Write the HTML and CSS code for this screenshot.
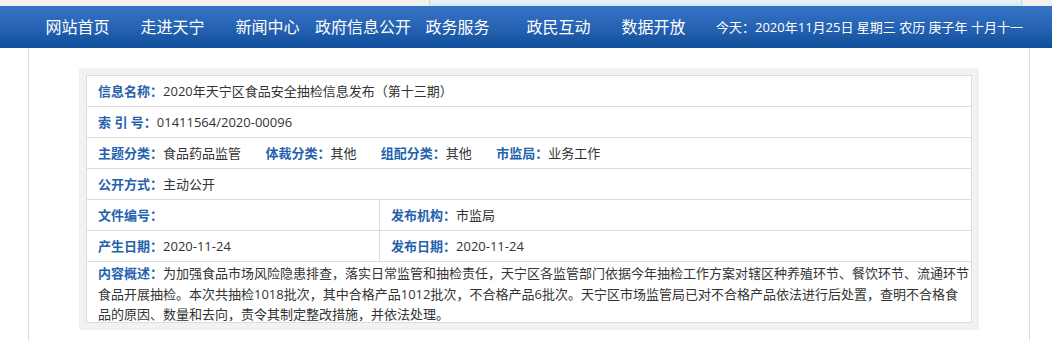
FILE: index.html
```html
<!DOCTYPE html>
<html lang="zh-CN">
<head>
  <meta charset="UTF-8" />
  <meta name="viewport" content="width=device-width, initial-scale=1.0" />
  <title>2020年天宁区食品安全抽检信息发布（第十三期）</title>
  <link rel="stylesheet" href="styles.css">
</head>
<body>
  <!-- strip of the page above -->
  <div class="top-strip">
    <span class="strip-left"></span>
    <span class="strip-mid"></span>
    <span class="strip-right"></span>
  </div>

  <div class="nav">
    <div class="nav-inner">
      <a class="nav-item" href="#">网站首页</a>
      <a class="nav-item" href="#">走进天宁</a>
      <a class="nav-item" href="#">新闻中心</a>
      <a class="nav-item" href="#">政府信息公开</a>
      <a class="nav-item" href="#">政务服务</a>
      <a class="nav-item nav-item-shift" href="#">政民互动</a>
      <a class="nav-item" href="#">数据开放</a>
      <span class="today">今天：2020年11月25日 星期三 农历 庚子年 十月十一</span>
    </div>
  </div>

  <div class="page">
    <div class="info-box">
      <div class="info-table">
        <div class="info-row">
          <div class="cell"><span class="label">信息名称：</span>2020年天宁区食品安全抽检信息发布（第十三期）</div>
        </div>
        <div class="info-row">
          <div class="cell"><span class="label">索 引 号：</span>01411564/2020-00096</div>
        </div>
        <div class="info-row">
          <div class="cell">
            <span class="meta"><span class="label">主题分类：</span>食品药品监管</span>
            <span class="meta"><span class="label">体裁分类：</span>其他</span>
            <span class="meta"><span class="label">组配分类：</span>其他</span>
            <span class="meta"><span class="label">市监局：</span>业务工作</span>
          </div>
        </div>
        <div class="info-row">
          <div class="cell"><span class="label">公开方式：</span>主动公开</div>
        </div>
        <div class="info-row split">
          <div class="cell"><span class="label">文件编号：</span></div>
          <div class="cell cell-right"><span class="label">发布机构：</span>市监局</div>
        </div>
        <div class="info-row split">
          <div class="cell"><span class="label">产生日期：</span>2020-11-24</div>
          <div class="cell cell-right"><span class="label">发布日期：</span>2020-11-24</div>
        </div>
        <div class="info-row summary">
          <p class="cell"><span class="label">内容概述：</span>为加强食品市场风险隐患排查，落实日常监管和抽检责任，天宁区各监管部门依据今年抽检工作方案对辖区种养殖环节、餐饮环节、流通环节食品开展抽检。本次共抽检1018批次，其中合格产品1012批次，不合格产品6批次。天宁区市场监管局已对不合格产品依法进行后处置，查明不合格食品的原因、数量和去向，责令其制定整改措施，并依法处理。</p>
        </div>
      </div>
    </div>
  </div>
</body>
</html>
```

FILE: styles.css
```css
* {
  margin: 0;
  padding: 0;
  box-sizing: border-box;
}

body {
  font-family: "Open Sans", "Noto Sans CJK SC", sans-serif;
  font-size: 13px;
  color: #333;
  background: #fff;
  height: 341px;
  overflow: hidden;
}

/* top strip */
.top-strip {
  display: flex;
  height: 6px;
  background: #f0f0f0;
}

.strip-left {
  width: 430px;
  border-right: 1px solid #d4d4d4;
}

.strip-mid {
  width: 592px;
  background: linear-gradient(to bottom, #e6f4fb, #d2ebf8);
  border-right: 1px solid #d4d4d4;
}

.strip-right {
  flex: 1;
}

/* navigation */
.nav {
  height: 42px;
  background: linear-gradient(to bottom, #3673c6 0%, #2763b3 50%, #0e4e9a 100%);
}

.nav-inner {
  display: flex;
  align-items: center;
  height: 100%;
  padding-left: 30px;
}

.nav-item {
  width: 95px;
  text-align: center;
  color: #fff;
  font-size: 16px;
  line-height: 42px;
  text-decoration: none;
  white-space: nowrap;
}

.nav-item-shift {
  margin-left: 6px;
}

.today {
  margin-left: 15px;
  color: #fff;
  font-size: 13px;
  line-height: 42px;
  white-space: nowrap;
}

/* page body */
.page {
  width: 1002px;
  height: 300px;
  margin-left: 28px;
  border-left: 1px solid #ddd;
  border-right: 1px solid #ddd;
  padding: 20px 0 0 50px;
}

.info-box {
  width: 900px;
  background: #f2f2f2;
  padding: 7px;
}

.info-table {
  background: #fff;
  border: 1px solid #ddd;
}

.info-row {
  border-bottom: 1px solid #ddd;
}

.info-row:last-child {
  border-bottom: none;
}

.info-row.split {
  display: grid;
  grid-template-columns: 292px 1fr;
}

.cell {
  padding: 0 10px 0 11px;
  line-height: 30px;
  white-space: nowrap;
}

.cell-right {
  border-left: 1px solid #ddd;
}

.label {
  color: #2462ae;
  font-weight: bold;
}

.meta {
  margin-right: 21px;
}

.summary {
  height: 60px;
}

.summary .cell {
  padding: 1px 1px 0 11px;
  line-height: 20.5px;
  white-space: normal;
}
```
